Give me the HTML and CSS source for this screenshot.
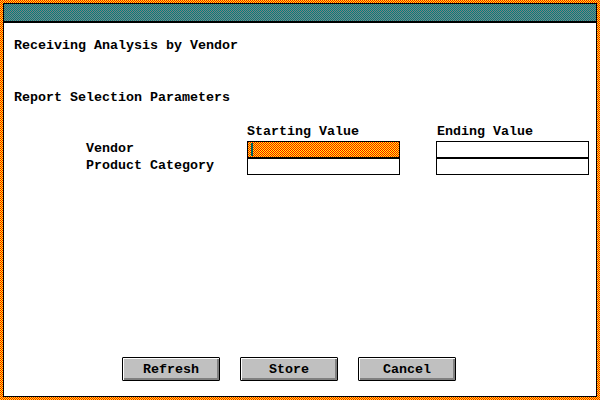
FILE: index.html
```html
<!DOCTYPE html>
<html lang="en">
<head>
    <meta charset="UTF-8">
    <meta name="viewport" content="width=device-width, initial-scale=1.0">
    <title>Receiving Analysis by Vendor</title>
    <link rel="stylesheet" href="styles.css">
</head>
<body>
    <div class="frame">
        <div class="window">
            <div class="titlebar"></div>
            <div class="content">
                <div class="heading first">Receiving Analysis by Vendor</div>
                <div class="heading second">Report Selection Parameters</div>
                <div class="params">
                    <div></div>
                    <div class="col-head">Starting Value</div>
                    <div class="col-head end">Ending Value</div>

                    <div class="labels">
                        <div class="label">Vendor</div>
                        <div class="label">Product Category</div>
                    </div>
                    <div class="fields">
                        <div class="field selected"><span class="caret"></span></div>
                        <div class="field"></div>
                    </div>
                    <div class="fields">
                        <div class="field"></div>
                        <div class="field"></div>
                    </div>
                </div>
                <div class="buttons">
                    <button class="btn">Refresh</button>
                    <button class="btn">Store</button>
                    <button class="btn">Cancel</button>
                </div>
            </div>
        </div>
    </div>
</body>
</html>
```

FILE: styles.css
```css
body { margin: 0; font-family: "Liberation Mono", "DejaVu Sans Mono", monospace; font-weight: bold; font-size: 13.33px; color: #000; }
.frame { width: 600px; height: 400px; box-sizing: border-box; padding: 3px; background: url("data:image/svg+xml,%3Csvg xmlns='http://www.w3.org/2000/svg' width='2' height='2' shape-rendering='crispEdges'%3E%3Crect width='2' height='2' fill='%23ffff00'/%3E%3Crect width='1' height='1' fill='%23ff0000'/%3E%3Crect x='1' y='1' width='1' height='1' fill='%23ff0000'/%3E%3C/svg%3E"); background-size: 2px 2px; }
.window { height: 100%; box-sizing: border-box; border: 1px solid #000; background: #fff; display: flex; flex-direction: column; }
.titlebar { height: 17px; border-bottom: 2px solid #000; background: url("data:image/svg+xml,%3Csvg xmlns='http://www.w3.org/2000/svg' width='2' height='2' shape-rendering='crispEdges'%3E%3Crect width='2' height='2' fill='%23808080'/%3E%3Crect width='1' height='1' fill='%23008080'/%3E%3Crect x='1' y='1' width='1' height='1' fill='%23008080'/%3E%3C/svg%3E"); background-size: 2px 2px; }
.content { flex: 1; display: flex; flex-direction: column; padding: 0 0 15px 10px; }
.heading { line-height: 16px; }
.heading.first { margin-top: 15px; }
.heading.second { margin-top: 36px; }
.params { display: grid; grid-template-columns: 125px 153px 153px; column-gap: 36px; margin: 18px 0 0 72px; }
.col-head { line-height: 16px; margin-bottom: 1px; white-space: nowrap; }
.col-head.end { padding-left: 1px; }
.label { height: 17px; line-height: 16px; white-space: nowrap; }
.fields { display: flex; flex-direction: column; }
.field { height: 17px; box-sizing: border-box; border: 1px solid #000; }
.field.selected { background: url("data:image/svg+xml,%3Csvg xmlns='http://www.w3.org/2000/svg' width='2' height='2' shape-rendering='crispEdges'%3E%3Crect width='2' height='2' fill='%23ffff00'/%3E%3Crect width='1' height='1' fill='%23ff0000'/%3E%3Crect x='1' y='1' width='1' height='1' fill='%23ff0000'/%3E%3C/svg%3E"); background-size: 2px 2px; padding: 1px 0 0 3px; }
.caret { display: block; width: 2px; height: 13px; background: #006060; }
.buttons { margin: auto 0 0 108px; display: flex; gap: 20px; }
.btn { width: 98px; height: 24px; padding: 0; font: inherit; color: #000; background: #c0c0c0; border: 1px solid #000; border-radius: 1px; box-shadow: inset 1px 1px #fff, inset -2px -2px #808080; }
```
